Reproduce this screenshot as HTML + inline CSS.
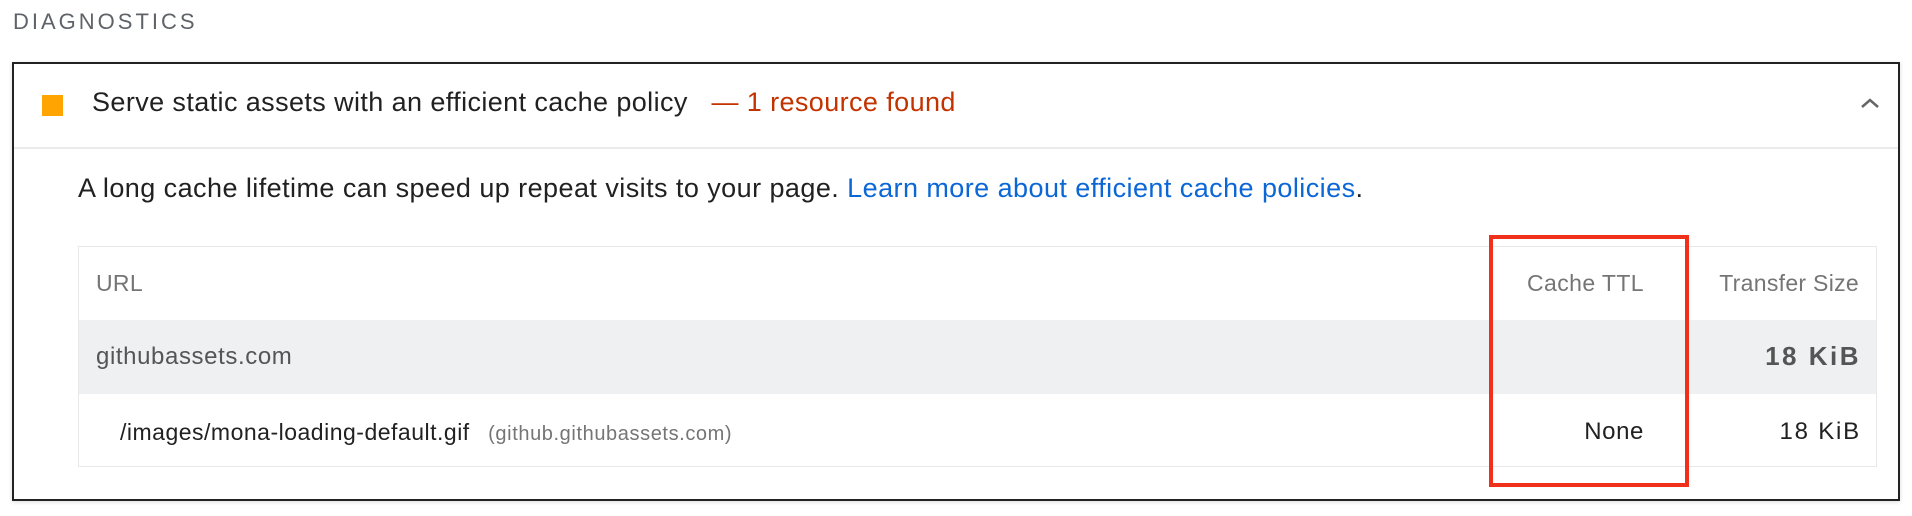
<!DOCTYPE html>
<html><head><meta charset="utf-8"><style>
*{margin:0;padding:0;box-sizing:border-box}
body{width:1912px;height:516px;background:#fff;font-family:"Liberation Sans",Arial,sans-serif;position:relative;overflow:hidden}
.a{position:absolute;white-space:nowrap}
</style></head><body>
<div class="a" style="left:13px;top:9px;font-size:22px;letter-spacing:3px;color:#5f6368;line-height:26px">DIAGNOSTICS</div>
<div class="a" style="left:12px;top:62px;width:1888px;height:439px;border:2px solid #222;box-shadow:0 1px 4px rgba(0,0,0,.15)"></div>
<div class="a" style="left:42px;top:95px;width:21px;height:21px;background:#ffa400"></div>
<div class="a" style="left:92px;top:86px;font-size:27px;letter-spacing:0.4px;line-height:32px;color:#212121">Serve static assets with an efficient cache policy<span style="color:#c33300">&nbsp;&nbsp; — 1 resource found</span></div>
<svg class="a" style="left:1858px;top:95px" width="24" height="16" viewBox="0 0 24 16"><path d="M4 12 L12 5 L20 12" fill="none" stroke="#666" stroke-width="2.5"/></svg>
<div class="a" style="left:14px;top:147px;width:1884px;height:2px;background:#ebebeb"></div>
<div class="a" style="left:78px;top:172px;font-size:27px;letter-spacing:0.44px;line-height:32px;color:#212121">A long cache lifetime can speed up repeat visits to your page. <span style="color:#0b66d6">Learn more about efficient cache policies</span>.</div>
<div class="a" style="left:78px;top:246px;width:1799px;height:221px;border:1px solid #e8e8e8"></div>
<div class="a" style="left:79px;top:320px;width:1797px;height:74px;background:#eef0f2"></div>
<div class="a" style="left:96px;top:269px;font-size:23px;letter-spacing:0.3px;line-height:28px;color:#757575">URL</div>
<div class="a" style="right:268px;top:269px;font-size:23px;letter-spacing:0.4px;line-height:28px;color:#757575">Cache TTL</div>
<div class="a" style="right:53px;top:269px;font-size:23px;letter-spacing:0.3px;line-height:28px;color:#757575">Transfer Size</div>
<div class="a" style="left:96px;top:343px;font-size:24px;letter-spacing:0.6px;line-height:28px;color:#555">githubassets.com</div>
<div class="a" style="right:53px;top:342px;font-size:26px;letter-spacing:2.5px;line-height:28px;color:#555;font-weight:bold;margin-right:-2px">18 KiB</div>
<div class="a" style="left:120px;top:418px;font-size:23px;letter-spacing:0.5px;line-height:28px;color:#212121">/images/mona-loading-default.gif<span style="font-size:20px;letter-spacing:0.6px;color:#757575">&nbsp;&nbsp;&nbsp;(github.githubassets.com)</span></div>
<div class="a" style="right:268px;top:418px;font-size:24px;letter-spacing:0.6px;line-height:28px;color:#212121">None</div>
<div class="a" style="right:53px;top:418px;font-size:24px;letter-spacing:1.8px;line-height:28px;color:#212121;margin-right:-2px">18 KiB</div>
<div class="a" style="left:1489px;top:235px;width:200px;height:252px;border:4px solid #f0301a"></div>
</body></html>
